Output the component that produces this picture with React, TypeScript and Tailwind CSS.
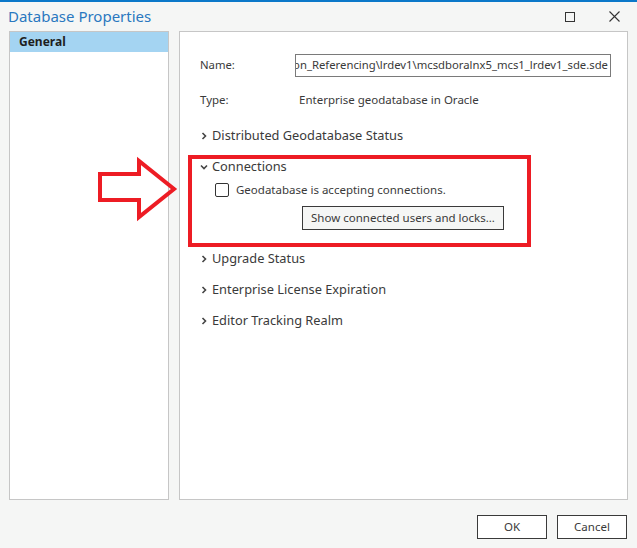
import React from "react";

const Chevron = ({ open }: { open?: boolean }) => (
  <svg width="8" height="8" viewBox="0 0 8 8" className="shrink-0">
    {open ? (
      <path d="M1 2.5 L4 5.5 L7 2.5" fill="none" stroke="#444" strokeWidth="1.6" />
    ) : (
      <path d="M2.5 1 L5.5 4 L2.5 7" fill="none" stroke="#444" strokeWidth="1.6" />
    )}
  </svg>
);

const Section = ({ title, open }: { title: string; open?: boolean }) => (
  <div className="flex h-[31px] items-center gap-[4px] pl-[20px] text-[12.8px] text-[#3a3a3a]">
    <Chevron open={open} />
    <span>{title}</span>
  </div>
);

export default function App() {
  return (
    <div
      className="relative flex h-[548px] w-[637px] flex-col overflow-hidden border-t-2 border-[#0b78c9] bg-[#f5f6f5]"
      style={{ fontFamily: '"Noto Sans", "Open Sans", sans-serif' }}
    >
      {/* title bar */}
      <div className="flex h-[29px] items-center pl-[8px] pr-[17px]">
        <span className="text-[15px] text-[#2a78c0]">Database Properties</span>
        <div className="ml-auto flex items-center gap-[34px]">
          <div className="h-[10px] w-[10px] border border-[#333]" />
          <svg width="11" height="11" viewBox="0 0 11 11">
            <path d="M0.5 0.5 L10.5 10.5 M10.5 0.5 L0.5 10.5" stroke="#333" strokeWidth="1.1" />
          </svg>
        </div>
      </div>

      {/* panels */}
      <div className="flex h-[469px] gap-[10px] px-[9px]">
        <div className="w-[160px] border border-[#c6c6c6] bg-white">
          <div className="flex h-[20px] items-center bg-[#a4d4f2] pl-[9px] text-[12px] font-bold text-[#1e1e1e]">
            General
          </div>
        </div>

        <div className="w-[449px] border border-[#c6c6c6] bg-white">
          <div className="mt-[22px] flex h-[23px] items-center pl-[20px] text-[11.3px] text-[#3a3a3a]">
            <span className="w-[95px] shrink-0">Name:</span>
            <div className="flex h-[23px] w-[316px] items-center justify-end overflow-hidden border border-[#7a7a7a] pr-[2px]">
              <span className="whitespace-nowrap">
                on_Referencing\lrdev1\mcsdboralnx5_mcs1_lrdev1_sde.sde
              </span>
            </div>
          </div>
          <div className="mt-[13px] flex h-[20px] items-center pl-[20px] text-[11.5px] text-[#3a3a3a]">
            <span className="w-[99px]">Type:</span>
            <span>Enterprise geodatabase in Oracle</span>
          </div>
          <div className="mt-[10px]">
            <Section title="Distributed Geodatabase Status" />
            <Section title="Connections" open />
            <div className="flex h-[16px] items-center gap-[7px] pl-[35px] text-[11.5px] text-[#3a3a3a]">
              <div className="h-[14px] w-[14px] rounded-[2px] border border-[#333] bg-white" />
              <span>Geodatabase is accepting connections.</span>
            </div>
            <div className="mt-[8px] pl-[122px]">
              <div className="flex h-[24px] w-[202px] items-center justify-center border border-[#3a3a3a] bg-[#f5f6f5] text-[11.5px] text-[#3a3a3a]">
                Show connected users and locks...
              </div>
            </div>
            <div className="mt-[13px]">
              <Section title="Upgrade Status" />
              <Section title="Enterprise License Expiration" />
              <Section title="Editor Tracking Realm" />
            </div>
          </div>
        </div>
      </div>

      {/* footer */}
      <div className="mt-[15px] flex justify-end gap-[10px] pr-[10px]">
        <div className="flex h-[24px] w-[70px] items-center justify-center border border-[#3a3a3a] bg-white text-[11.5px] text-[#3a3a3a]">
          OK
        </div>
        <div className="flex h-[24px] w-[70px] items-center justify-center border border-[#3a3a3a] bg-white text-[11.5px] text-[#3a3a3a]">
          Cancel
        </div>
      </div>

      {/* annotations */}
      <div className="absolute left-[188px] top-[153px] h-[92px] w-[343px] border-4 border-[#ed1c24]" />
      <svg className="absolute left-0 top-0" width="200" height="240" viewBox="0 0 200 240">
        <polygon
          points="100,172 139,172 139,159 174,187 139,215 139,198 100,198"
          fill="none"
          stroke="#ed1c24"
          strokeWidth="4"
        />
      </svg>
    </div>
  );
}
